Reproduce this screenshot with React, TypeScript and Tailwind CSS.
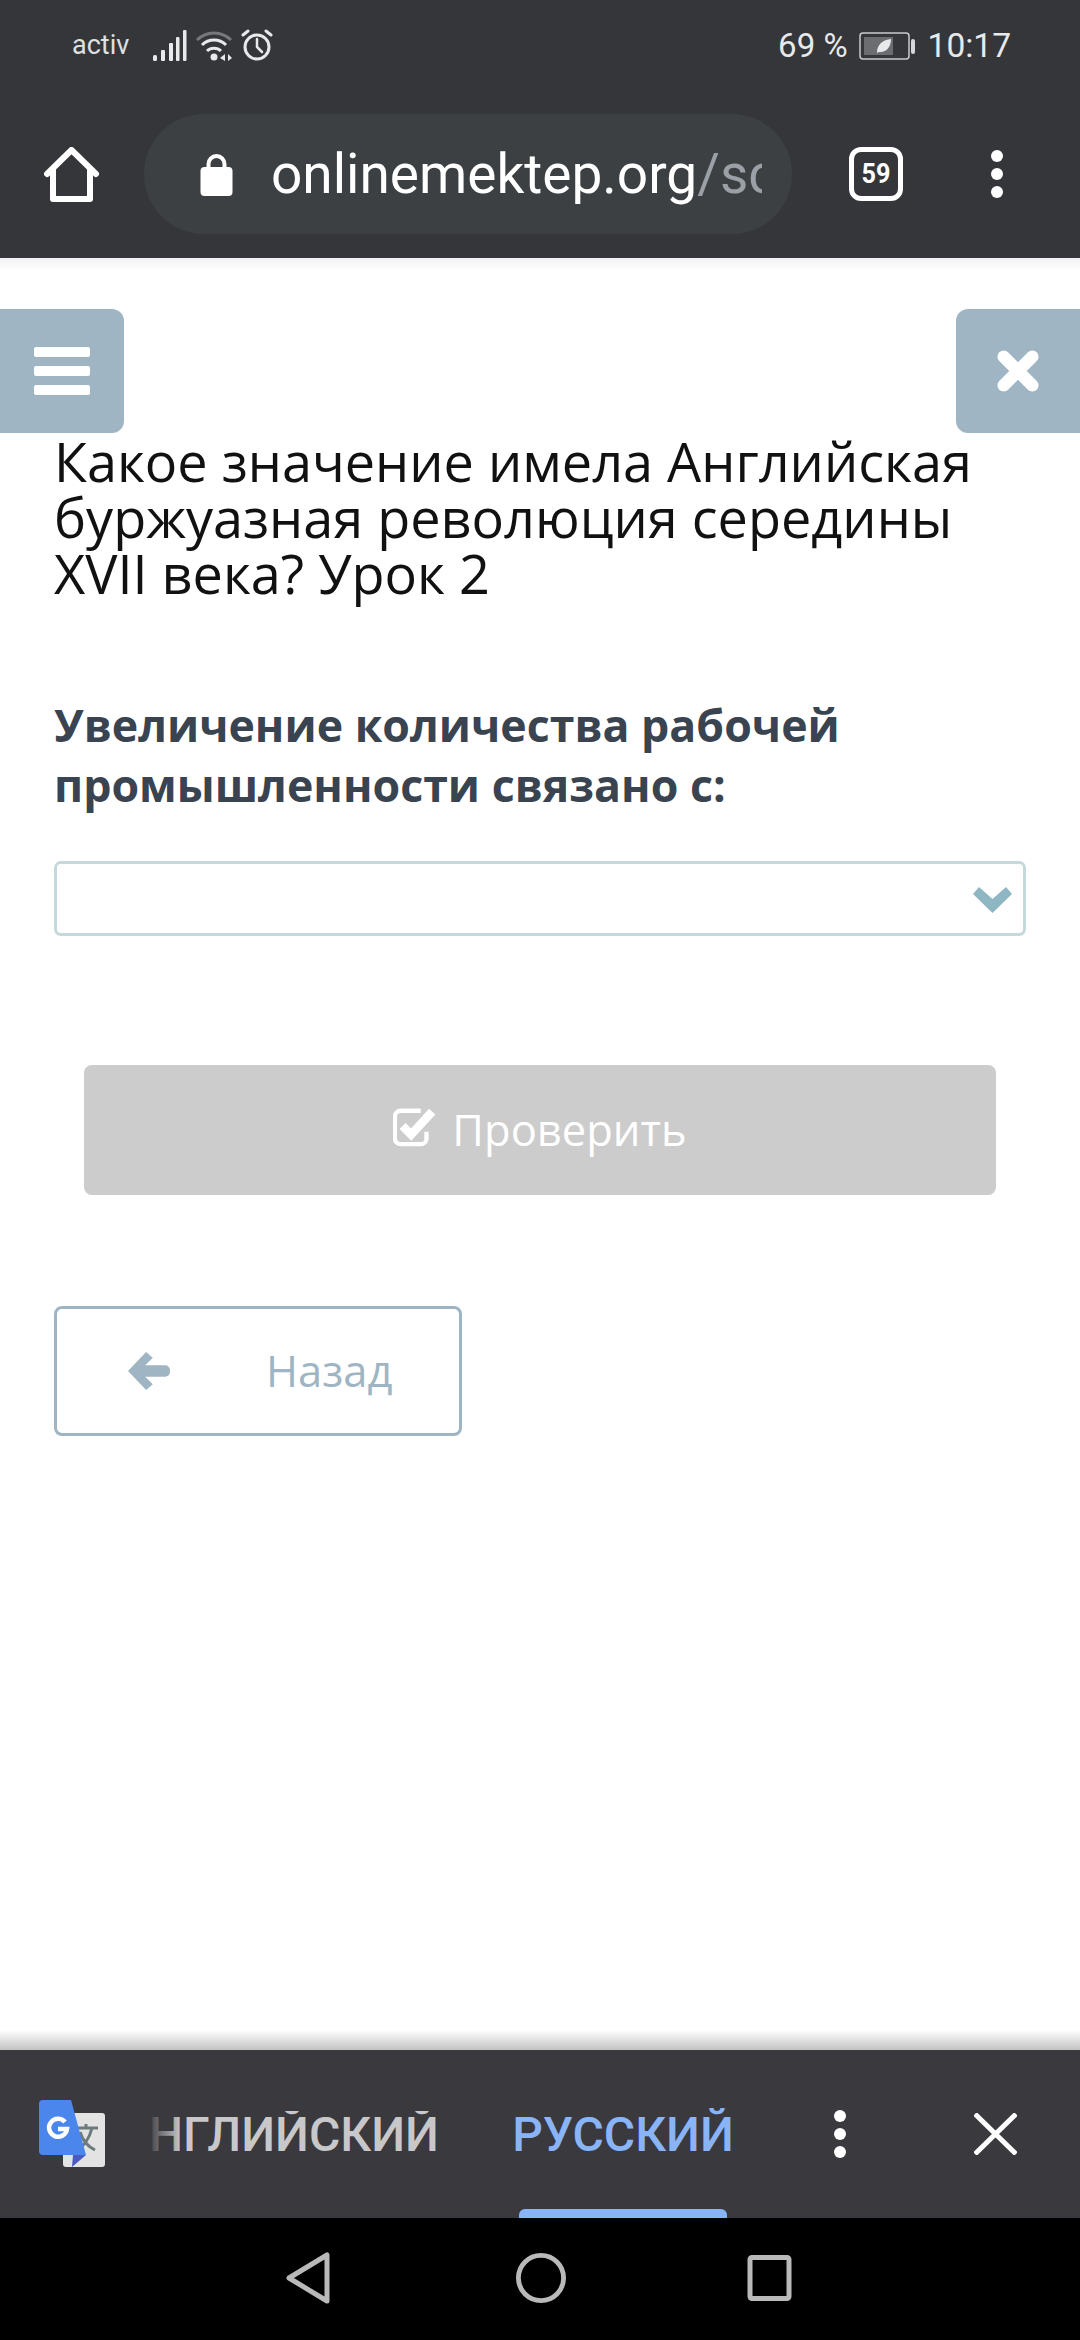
const ROBOTO = 'font-["Roboto",sans-serif]'

function StatusBar() {
  return (
    <div className={`flex h-[90px] items-center justify-between pl-[72px] pr-[69px] pt-[1px] text-[#e8e9ea] ${ROBOTO}`}>
      <div className="flex items-center">
        <span className="w-[80px] text-[27px] leading-none text-[#dfe0e1]">activ</span>
        <svg width="36" height="32" viewBox="0 0 36 32" fill="#e8e9ea">
          <rect x="1" y="25" width="4" height="6" rx="1.5" />
          <rect x="9" y="20" width="4" height="11" rx="1" />
          <rect x="17" y="13" width="4" height="18" rx="1" />
          <rect x="24" y="7" width="3.5" height="24" rx="1" />
          <rect x="31" y="0" width="3.5" height="31" rx="1" />
        </svg>
        <svg className="ml-[7px]" width="38" height="32" viewBox="0 0 38 32" fill="none">
          <path d="M2 10 A24 24 0 0 1 36 10" stroke="#77787b" strokeWidth="3" />
          <path d="M7 15 A17 17 0 0 1 31 15" stroke="#e8e9ea" strokeWidth="3" />
          <path d="M12 21 A10 10 0 0 1 26 21" stroke="#e8e9ea" strokeWidth="3" />
          <circle cx="19" cy="27" r="3.5" fill="#e8e9ea" />
          <path d="M30 24 L25 28 L30 31Z M33 24 L37 28 L33 31Z" fill="#e8e9ea" />
        </svg>
        <svg className="ml-[8px]" width="32" height="34" viewBox="0 0 32 34" fill="none" stroke="#e8e9ea" strokeLinecap="round">
          <circle cx="16" cy="18" r="12" strokeWidth="3" />
          <path d="M16 10 V18 L21 23" strokeWidth="2.5" />
          <path d="M2 6 L7 2 M30 6 L25 2" strokeWidth="3" />
        </svg>
      </div>
      <div className="flex items-center">
        <span className="text-[33px] leading-none">69 %</span>
        <svg className="ml-[11px]" width="57" height="28" viewBox="0 0 57 28" fill="none">
          <rect x="1" y="1" width="49" height="26" rx="3" stroke="#c9cacb" strokeWidth="1.5" />
          <rect x="5" y="5" width="29" height="18" fill="#6c6d70" />
          <path d="M18 21 C18 12 24 8 32 7 C32 15 27 21 20 20Z" fill="#e8e9ea" />
          <rect x="52" y="7" width="4" height="15" rx="2" fill="#d6d7d8" />
        </svg>
        <span className="ml-[12px] text-[33.5px] leading-none">10:17</span>
      </div>
    </div>
  )
}

function BrowserBar() {
  return (
    <div className="flex h-[168px] items-start bg-[#35363a]">
      <div className="flex w-[144px] shrink-0 justify-center pt-[57px]">
        <svg width="56" height="56" viewBox="0 0 56 56" fill="none" stroke="#fff" strokeWidth="6" strokeLinejoin="round" strokeLinecap="round">
          <path d="M3 27 L27.5 3 L52 27" />
          <path d="M9 23 V52 H46 V23" />
        </svg>
      </div>
      <div className="mt-[24px] flex h-[120px] w-[648px] shrink-0 items-center rounded-full bg-[#3c4043] pl-[56px]">
        <svg className="shrink-0" width="33" height="44" viewBox="0 0 32 44" fill="#fff">
          <path d="M8 20 V12 a8 8 0 0 1 16 0 V20" fill="none" stroke="#fff" strokeWidth="4" />
          <rect x="0" y="15" width="32" height="29" rx="4" />
        </svg>
        <div className={`ml-[38px] w-[491px] overflow-hidden whitespace-nowrap text-[55px] leading-[64px] text-white ${ROBOTO}`}>
          onlinemektep.org<span className="text-[#9aa0a6]">/school</span>
        </div>
      </div>
      <div className="ml-[57px] mt-[57px] flex h-[54px] w-[54px] shrink-0 items-center justify-center rounded-[12px] border-[5px] border-white">
        <span className={`text-[28px] font-bold leading-none text-white ${ROBOTO} scale-x-90`}>59</span>
      </div>
      <div className="ml-[88px] mt-[60px] flex flex-col gap-[6px]">
        <span className="h-[12px] w-[12px] rounded-full bg-white" />
        <span className="h-[12px] w-[12px] rounded-full bg-white" />
        <span className="h-[12px] w-[12px] rounded-full bg-white" />
      </div>
    </div>
  )
}

function MainContent() {
  return (
    <main className='flex-1 bg-white font-["Open_Sans",sans-serif]'>
      <div className="h-[12px] bg-linear-to-b from-[#f1f1f1] to-white" />
      <div className="mt-[39px] flex justify-between">
        <button className="flex h-[124px] w-[124px] items-center justify-center rounded-r-[12px] bg-[#a0b5c3]">
          <span className="flex w-[56px] flex-col gap-[9px]">
            <span className="h-[10px] rounded-[2px] bg-white" />
            <span className="h-[10px] rounded-[2px] bg-white" />
            <span className="h-[10px] rounded-[2px] bg-white" />
          </span>
        </button>
        <button className="flex h-[124px] w-[124px] items-center justify-center rounded-l-[12px] bg-[#a0b5c3]">
          <svg width="46" height="44" viewBox="0 0 46 46" fill="none" stroke="#fff" strokeWidth="13" strokeLinecap="round" strokeLinejoin="round">
            <path d="M8 8 L38 38 M38 8 L8 38" />
          </svg>
        </button>
      </div>
      <div className="px-[54px]">
        <h1 className="text-[54px] font-normal leading-[56px] text-[#111]">
          Какое значение имела Английская<br />буржуазная революция середины<br />XVII века? Урок 2
        </h1>
        <p className="mt-[94px] text-[44.7px] font-bold leading-[60px] text-[#3a4350]">
          Увеличение количества рабочей<br />промышленности связано с:
        </p>
        <div className="mt-[46px] flex h-[75px] items-center justify-end rounded-[7px] border-[3px] border-[#c5d8dc] pr-[11px]">
          <svg className="translate-y-[1px]" width="39" height="26" viewBox="0 0 39 26" fill="#8fb6c3">
            <path d="M0 7 L6 0 L19.5 12 L33 0 L39 7 L19.5 26Z" />
          </svg>
        </div>
        <div className="px-[30px]">
          <button className="mt-[129px] flex h-[130px] w-full items-center justify-center rounded-[8px] bg-[#cccccc] text-[43.5px] text-white">
            <svg className="mr-[15px] -translate-y-[3px]" width="44" height="42" viewBox="0 0 46 42" fill="none">
              <path d="M35 26 V33 a6 6 0 0 1 -6 6 H8 a6 6 0 0 1 -6 -6 V10 a6 6 0 0 1 6 -6 H29" stroke="#fff" strokeWidth="4.5" />
              <path d="M10 20 L19 29 L41 5" stroke="#fff" strokeWidth="9" />
            </svg>
            Проверить
          </button>
        </div>
        <button className="mt-[111px] flex h-[130px] w-[408px] items-center rounded-[8px] border-[3px] border-[#a0b5c3] pl-[71px] text-[43.5px] text-[#a0b5c3]">
          <svg width="42" height="40" viewBox="0 0 44 40" fill="#a0b5c3">
            <path d="M0 20 L19 0 L26 6 L18 14 H39 a5 5 0 0 1 5 5 v2 a5 5 0 0 1 -5 5 H18 L26 34 L19 40Z" />
          </svg>
          <span className="ml-[96px]">Назад</span>
        </button>
      </div>
    </main>
  )
}

function TranslateBar() {
  return (
    <div className={`flex h-[168px] items-start bg-[#3a393e] ${ROBOTO} font-medium`}>
      <svg className="ml-[39px] mt-[50px] shrink-0" width="66" height="67" viewBox="0 0 66 67">
        <rect x="24" y="13" width="42" height="54" rx="3" fill="#e3e3e3" />
        <path d="M35 28 H59 M47 24 V28 M53 28 C50 40 44 47 37 51 M41 32 C44 42 50 47 56 50" stroke="#6d7a7c" strokeWidth="3" fill="none" />
        <path d="M34 55 L33 67 L47 55Z" fill="#4a5bc4" />
        <path d="M4 0 H32 L47 55 H4 a4 4 0 0 1 -4 -4 V4 a4 4 0 0 1 4 -4Z" fill="#4a86ec" />
        <path d="M26 22 A9 9 0 1 0 28 29 H19" fill="none" stroke="#fff" strokeWidth="4.5" />
      </svg>
      <div className="relative ml-[42px] mt-[61px] flex w-[292px] shrink-0 justify-end overflow-hidden whitespace-nowrap text-[48px] leading-none text-[#c8c8ca]">
        АНГЛИЙСКИЙ
        <span className="absolute inset-y-0 left-0 w-[34px] bg-linear-to-r from-[#3a393e] to-transparent" />
      </div>
      <div className="ml-[74px] flex h-full w-[220px] shrink-0 flex-col items-center">
        <span className="mt-[61px] text-[48px] leading-none text-[#8ab4f8]">РУССКИЙ</span>
        <span className="mt-auto h-[9px] w-[208px] rounded-t-[6px] bg-[#8ab4f8]" />
      </div>
      <div className="ml-[101px] mt-[60px] flex flex-col gap-[6px]">
        <span className="h-[12px] w-[12px] rounded-full bg-white" />
        <span className="h-[12px] w-[12px] rounded-full bg-white" />
        <span className="h-[12px] w-[12px] rounded-full bg-white" />
      </div>
      <svg className="ml-[128px] mt-[63px]" width="43" height="42" viewBox="0 0 43 42" stroke="#fff" strokeWidth="5">
        <path d="M1 1 L42 41 M42 1 L1 41" />
      </svg>
    </div>
  )
}

function NavBar() {
  return (
    <div className="flex h-[122px] items-center bg-black pb-[2px] pl-[286px]">
      <svg width="44" height="52" viewBox="0 0 44 52" fill="none" stroke="#b9b9b9" strokeWidth="5" strokeLinejoin="round">
        <path d="M3 26 L41 3 V49Z" />
      </svg>
      <svg className="ml-[186px]" width="50" height="50" viewBox="0 0 52 52" fill="none" stroke="#b9b9b9" strokeWidth="5">
        <circle cx="26" cy="26" r="23.5" />
      </svg>
      <svg className="ml-[181px]" width="45" height="46" viewBox="0 0 44 46" fill="none" stroke="#b9b9b9" strokeWidth="5" strokeLinejoin="round">
        <rect x="2.5" y="2.5" width="39" height="41" rx="2" />
      </svg>
    </div>
  )
}

export default function App() {
  return (
    <div className="flex h-[2340px] w-[1080px] flex-col overflow-hidden bg-white">
      <div className="bg-[#35363a]">
        <StatusBar />
        <BrowserBar />
      </div>
      <MainContent />
      <div className="h-[20px] bg-linear-to-b from-white to-[#c4c4c4]" />
      <TranslateBar />
      <NavBar />
    </div>
  )
}
